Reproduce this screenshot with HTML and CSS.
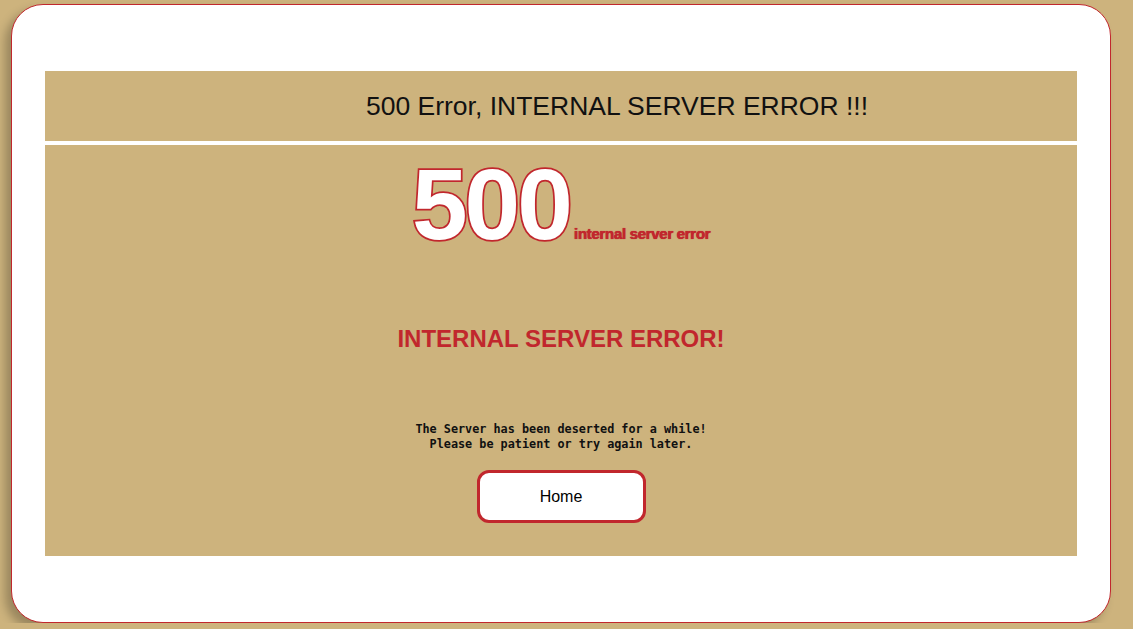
FILE: index.html
```html
<!DOCTYPE html>
<html>
<head>
<meta charset="utf-8">
<link rel="stylesheet" href="styles.css">
</head>
<body>
<div class="card">
  <div class="header">500 Error, INTERNAL SERVER ERROR !!!</div>
  <div class="main">
    <div class="code-row">
      <span class="code">500</span><span class="code-sub">internal server error</span>
    </div>
    <h1 class="headline">INTERNAL SERVER ERROR!</h1>
    <p class="msg">The Server has been deserted for a while!<br>Please be patient or try again later.</p>
    <a class="home" href="#">Home</a>
  </div>
</div>
</body>
</html>
```
FILE: styles.css
```css
html, body {
  margin: 0;
  padding: 0;
  background: #cdb37d;
  font-family: "Liberation Sans", Arial, sans-serif;
}
.card {
  box-sizing: border-box;
  margin: 4px 0 0 11px;
  width: 1100px;
  height: 619px;
  background: #fff;
  border: 1px solid #c1272d;
  border-radius: 32px;
  box-shadow: -6px 6px 10px rgba(0, 0, 0, 0.25);
  padding: 66px 33px 0 33px;
  display: flex;
  flex-direction: column;
  gap: 4px;
}
.header {
  height: 70px;
  background: #cdb37d;
  display: flex;
  align-items: center;
  justify-content: center;
  padding-left: 112px;
  font-size: 26.5px;
  color: #111;
}
.main {
  height: 411px;
  background: #cdb37d;
  display: flex;
  flex-direction: column;
  align-items: center;
}
.code-row {
  margin-top: 14px;
  display: flex;
  align-items: baseline;
}
.code {
  font-size: 100px;
  line-height: 90px;
  height: 86px;
  font-weight: bold;
  color: #fff;
  letter-spacing: -3px;
  -webkit-text-stroke: 3.5px #c1272d;
  paint-order: stroke fill;
}
.code-sub {
  margin-left: 4px;
  font-size: 15px;
  font-weight: bold;
  letter-spacing: -0.3px;
  color: #c1272d;
  text-shadow: 0.5px 0 0 #c1272d, 0 0 1px #c1272d;
}
.headline {
  margin: 80px 0 0 0;
  font-size: 24px;
  line-height: 28px;
  font-weight: bold;
  color: #c1272d;
}
.msg {
  margin: 69px 0 0 0;
  font-family: "DejaVu Sans Mono", "Liberation Mono", monospace;
  font-size: 11.8px;
  line-height: 15px;
  font-weight: bold;
  text-align: center;
  color: #111;
}
.home {
  margin-top: 18px;
  box-sizing: border-box;
  width: 169px;
  height: 53px;
  border: 3px solid #c1272d;
  border-radius: 12px;
  background: #fff;
  display: flex;
  align-items: center;
  justify-content: center;
  font-size: 16px;
  color: #000;
  text-decoration: none;
}
```
